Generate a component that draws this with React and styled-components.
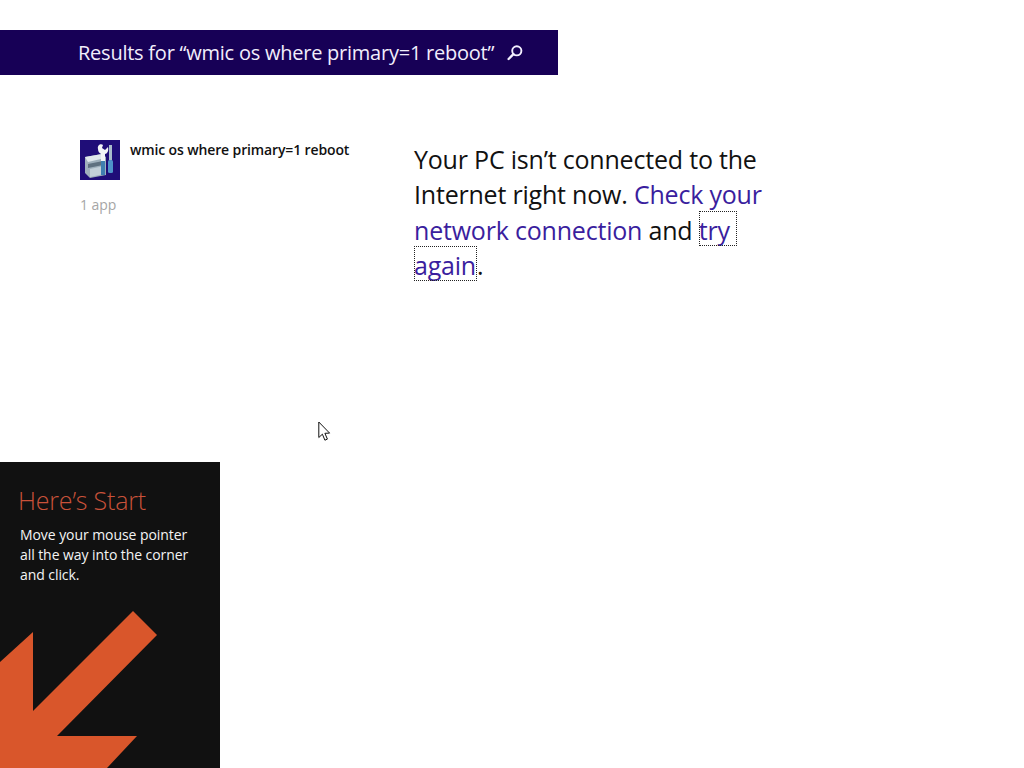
import React from "react";
import styled, { createGlobalStyle } from "styled-components";

const Global = createGlobalStyle`
  html, body { margin: 0; padding: 0; background: #fff; }
  body { font-family: "Open Sans", "Noto Sans", sans-serif; width: 1024px; height: 768px; overflow: hidden; position: relative; }
`;

const Page = styled.div`
  width: 1024px;
  height: 768px;
  padding-top: 30px;
  box-sizing: border-box;
`;

const ResultsBar = styled.header`
  width: 558px;
  height: 45px;
  background: #170056;
  color: #f2eefc;
  display: flex;
  align-items: center;
  padding-left: 78px;
  box-sizing: border-box;
  gap: 12px;
`;

const ResultsTitle = styled.h1`
  margin: 0;
  font-size: 20px;
  font-weight: 380;
  line-height: 45px;
  letter-spacing: -0.24px;
  white-space: nowrap;
`;

const Content = styled.main`
  display: flex;
  padding: 65px 0 0 80px;
`;

const AppColumn = styled.section`
  width: 334px;
  flex: none;
`;

const AppRow = styled.div`
  display: flex;
  gap: 10px;
`;

const AppIcon = styled.svg`
  width: 40px;
  height: 40px;
  display: block;
  flex: none;
`;

const AppName = styled.div`
  font-size: 14px;
  font-weight: 600;
  line-height: 20px;
  color: #111;
  letter-spacing: -0.13px;
  white-space: nowrap;
`;

const AppCount = styled.div`
  margin-top: 15px;
  font-size: 14px;
  line-height: 20px;
  color: #a6a6a6;
  letter-spacing: -0.05px;
`;

const Message = styled.p`
  margin: 2px 0 0;
  width: 360px;
  font-size: 25px;
  font-weight: 400;
  line-height: 35.4px;
  color: #111;
  letter-spacing: -0.2px;
`;

const Link = styled.span`
  color: #3a1e9e;
`;

const FocusLink = styled.span`
  position: relative;
  color: #3a1e9e;
  padding-right: ${(p) => p.$pad || 0}px;

  &::after {
    content: "";
    position: absolute;
    left: 0;
    right: 0;
    top: -2px;
    height: 35px;
    box-sizing: border-box;
    border: 1px dotted #222;
  }
`;

const TipPanel = styled.aside`
  position: absolute;
  left: 0;
  top: 462px;
  width: 220px;
  height: 306px;
  background: #111111;
  overflow: hidden;
`;

const TipTitle = styled.h2`
  margin: 21px 0 0 18px;
  font-size: 25px;
  font-weight: 300;
  line-height: 34px;
  color: #c9523a;
  letter-spacing: -0.2px;
`;

const TipText = styled.p`
  margin: 8px 0 0 20px;
  font-size: 14px;
  line-height: 20px;
  color: #f4f4f4;
  letter-spacing: -0.07px;
`;

const TipArrow = styled.svg`
  position: absolute;
  left: 0;
  top: 0;
`;

const Cursor = styled.svg`
  position: absolute;
  left: 318px;
  top: 421px;
`;

export default function App() {
  return (
    <>
      <Global />
      <Page>
        <ResultsBar>
          <ResultsTitle>Results for “wmic os where primary=1 reboot”</ResultsTitle>
          <svg width="18" height="18" viewBox="0 0 18 18" fill="none" aria-hidden="true">
            <circle cx="10.8" cy="6.8" r="4.6" stroke="#f4f0ff" strokeWidth="1.9" />
            <path d="M7.4 10.2 L2.6 15" stroke="#f4f0ff" strokeWidth="2.4" strokeLinecap="round" />
          </svg>
        </ResultsBar>
        <Content>
          <AppColumn>
            <AppRow>
              <AppIcon viewBox="0 0 40 40" aria-hidden="true">
                <rect width="40" height="40" fill="#1f0d78" />
                <path d="M5 17 L22 14 L26 17 L26 35 L10 38 L5 33 Z" fill="#9fb0bc" />
                <path d="M5 17 L22 14 L25 18 L8 22 Z" fill="#dfe7ec" />
                <path d="M8 24 L23 21 L23 25 L8 28 Z" fill="#5f7180" />
                <path d="M10 29 L24 26 L24 34 L10 37 Z" fill="#c3d0d9" />
                <path d="M18 9 C17 5 21 3 23 5 L22 8 L25 10 L28 7 C29 11 27 14 25 14 L25 32 L21 33 L21 14 C19 13 18 11 18 9 Z" fill="#f2f4f6" />
                <rect x="29" y="5" width="3" height="15" fill="#a9bccb" />
                <rect x="28" y="20" width="5" height="13" rx="1.5" fill="#4e93c9" />
                <rect x="21" y="21" width="4" height="14" fill="#3f7fb0" />
              </AppIcon>
              <AppName>wmic os where primary=1 reboot</AppName>
            </AppRow>
            <AppCount>1 app</AppCount>
          </AppColumn>
          <Message>
            <span>Your PC isn’t connected to the</span> <span>Internet right now.</span>{" "}
            <Link>Check your</Link> <Link>network connection</Link> and{" "}
            <FocusLink $pad={7}>try</FocusLink> <FocusLink $pad={1}>again</FocusLink>.
          </Message>
        </Content>
      </Page>
      <TipPanel>
        <TipTitle>Here’s Start</TipTitle>
        <TipText>
          Move your mouse pointer
          <br />
          all the way into the corner
          <br />
          and click.
        </TipText>
        <TipArrow width="220" height="306" viewBox="0 0 220 306" aria-hidden="true">
          <polygon points="133,149 157,173 57,274 137,274 107,306 0,306 0,200 33,170 33,249" fill="#d9562b" />
        </TipArrow>
      </TipPanel>
      <Cursor width="13" height="21" viewBox="0 0 13 21" aria-hidden="true">
        <path d="M0.8 1 L0.8 16.5 L4.4 13.2 L6.9 19.2 L9.4 18.1 L6.9 12.3 L11.6 12.1 Z" fill="#fff" stroke="#111" strokeWidth="1" strokeLinejoin="miter" />
      </Cursor>
    </>
  );
}
